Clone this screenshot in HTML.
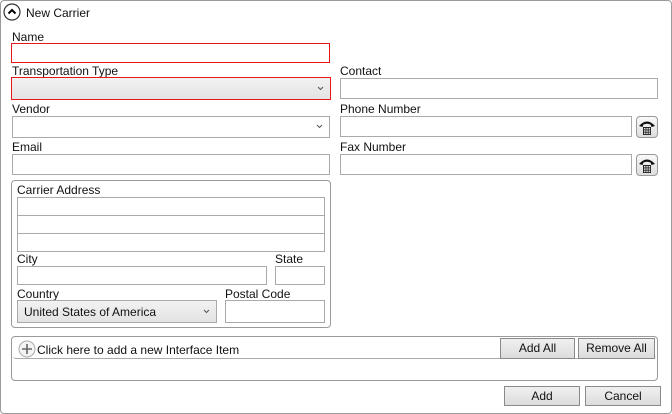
<!DOCTYPE html>
<html><head><style>
*{box-sizing:border-box;margin:0;padding:0}
body{width:672px;height:414px;background:#fff;font-family:"Liberation Sans",sans-serif;font-size:12px;color:#111;position:relative;overflow:hidden}
.a{position:absolute}
.outer{left:0;top:0;width:672px;height:414px;border:1px solid #9a9a9a;border-radius:4px}
.lbl{position:absolute;font-size:12px;line-height:14px;white-space:nowrap}
.in{position:absolute;border:1px solid #aaa;background:#fff}
.red{border:1px solid #e81818}
.cb{background:linear-gradient(#f2f2f2,#e3e3e3)}
.arr{position:absolute;right:6px;top:50%;margin-top:-3px;width:7px;height:5px}
.btn{position:absolute;border:1px solid #8a8a8a;background:linear-gradient(#f0f0f0,#dcdcdc);text-align:center;font-size:12px;line-height:18px}
.grp{position:absolute;border:1px solid #9a9a9a;border-radius:4px}
.ph{position:absolute;width:22px;height:22px;border:1px solid #999;border-radius:4px;background:linear-gradient(#fafafa,#ddd)}
</style></head><body>
<div class="a outer"></div>
<svg class="a" style="left:3px;top:3px" width="18" height="18"><circle cx="9" cy="9" r="8" fill="#fff" stroke="#333" stroke-width="1.2"/><path d="M5.5 10.5 L9 7 L12.5 10.5" fill="none" stroke="#000" stroke-width="2"/></svg>
<div class="lbl" style="left:26px;top:6px">New Carrier</div>

<div class="lbl" style="left:12px;top:30px">Name</div>
<div class="in red" style="left:11px;top:43px;width:319px;height:20px"></div>
<div class="lbl" style="left:12px;top:64px">Transportation Type</div>
<div class="in red cb" style="left:11px;top:77px;width:320px;height:23px"><svg class="arr" viewBox="0 0 7 5"><path d="M1 1L3.5 3.5L6 1" fill="none" stroke="#555"/></svg></div>
<div class="lbl" style="left:12px;top:102px">Vendor</div>
<div class="in" style="left:12px;top:116px;width:318px;height:22px"><svg class="arr" viewBox="0 0 7 5"><path d="M1 1L3.5 3.5L6 1" fill="none" stroke="#555"/></svg></div>
<div class="lbl" style="left:12px;top:140px">Email</div>
<div class="in" style="left:12px;top:154px;width:318px;height:21px"></div>

<div class="lbl" style="left:340px;top:64px">Contact</div>
<div class="in" style="left:340px;top:78px;width:318px;height:21px"></div>
<div class="lbl" style="left:340px;top:102px">Phone Number</div>
<div class="in" style="left:340px;top:116px;width:292px;height:21px"></div>
<div class="ph" style="left:636px;top:116px"><svg width="20" height="20"><path d="M2 9 Q10 0 18 9 L14.5 10 L13.5 7.5 Q10 6 6.5 7.5 L5.5 10 Z" fill="#111"/><path d="M6 10 H14 V18 H6Z" fill="#222"/><g fill="#ddd"><rect x="7" y="11" width="1.5" height="1.5"/><rect x="9.3" y="11" width="1.5" height="1.5"/><rect x="11.6" y="11" width="1.5" height="1.5"/><rect x="7" y="13.3" width="1.5" height="1.5"/><rect x="9.3" y="13.3" width="1.5" height="1.5"/><rect x="11.6" y="13.3" width="1.5" height="1.5"/><rect x="7" y="15.6" width="1.5" height="1.5"/><rect x="9.3" y="15.6" width="1.5" height="1.5"/><rect x="11.6" y="15.6" width="1.5" height="1.5"/></g></svg></div>
<div class="lbl" style="left:340px;top:140px">Fax Number</div>
<div class="in" style="left:340px;top:154px;width:292px;height:21px"></div>
<div class="ph" style="left:636px;top:154px"><svg width="20" height="20"><path d="M2 9 Q10 0 18 9 L14.5 10 L13.5 7.5 Q10 6 6.5 7.5 L5.5 10 Z" fill="#111"/><path d="M6 10 H14 V18 H6Z" fill="#222"/><g fill="#ddd"><rect x="7" y="11" width="1.5" height="1.5"/><rect x="9.3" y="11" width="1.5" height="1.5"/><rect x="11.6" y="11" width="1.5" height="1.5"/><rect x="7" y="13.3" width="1.5" height="1.5"/><rect x="9.3" y="13.3" width="1.5" height="1.5"/><rect x="11.6" y="13.3" width="1.5" height="1.5"/><rect x="7" y="15.6" width="1.5" height="1.5"/><rect x="9.3" y="15.6" width="1.5" height="1.5"/><rect x="11.6" y="15.6" width="1.5" height="1.5"/></g></svg></div>

<div class="grp" style="left:11px;top:180px;width:320px;height:148px"></div>
<div class="lbl" style="left:17px;top:183px">Carrier Address</div>
<div class="in" style="left:17px;top:197px;width:308px;height:19px"></div>
<div class="in" style="left:17px;top:215px;width:308px;height:19px"></div>
<div class="in" style="left:17px;top:233px;width:308px;height:19px"></div>
<div class="lbl" style="left:17px;top:252px">City</div>
<div class="lbl" style="left:275px;top:252px">State</div>
<div class="in" style="left:17px;top:266px;width:250px;height:19px"></div>
<div class="in" style="left:275px;top:266px;width:50px;height:19px"></div>
<div class="lbl" style="left:17px;top:287px">Country</div>
<div class="lbl" style="left:225px;top:287px">Postal Code</div>
<div class="in cb" style="left:17px;top:300px;width:200px;height:23px"><span style="position:absolute;left:6px;top:4px">United States of America</span><svg class="arr" viewBox="0 0 7 5"><path d="M1 1L3.5 3.5L6 1" fill="none" stroke="#555"/></svg></div>
<div class="in" style="left:225px;top:300px;width:100px;height:23px"></div>

<div class="grp" style="left:11px;top:336px;width:647px;height:45px"></div>
<div class="a" style="left:13px;top:338px;width:643px;height:21px;border-bottom:1px solid #aaa;border-radius:3px"></div>
<svg class="a" style="left:18px;top:340px" width="18" height="18"><circle cx="9" cy="9" r="8" fill="#f4f4f4" stroke="#aaa"/><path d="M9 4V14M4 9H14" stroke="#666" stroke-width="1.6"/></svg>
<div class="lbl" style="left:37px;top:343px">Click here to add a new Interface Item</div>
<div class="btn" style="left:500px;top:338px;width:75px;height:21px">Add All</div>
<div class="btn" style="left:578px;top:338px;width:77px;height:21px">Remove All</div>

<div class="btn" style="left:504px;top:386px;width:76px;height:20px">Add</div>
<div class="btn" style="left:585px;top:386px;width:76px;height:20px">Cancel</div>
</body></html>
